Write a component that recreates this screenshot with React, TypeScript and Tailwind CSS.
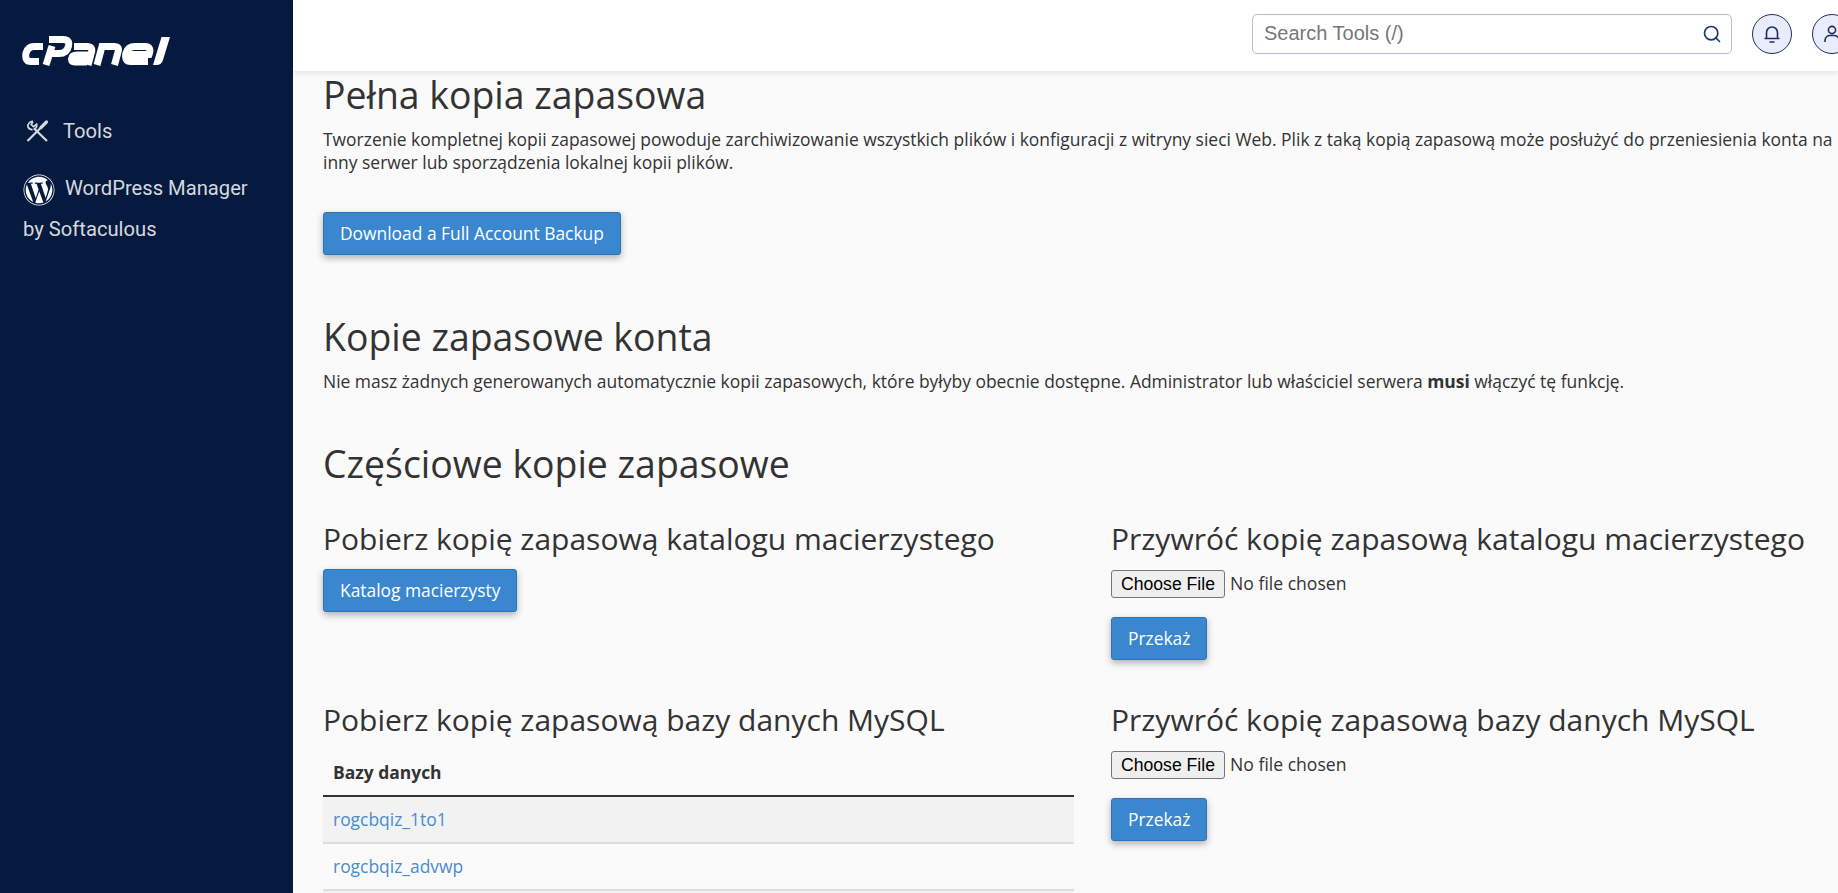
import { Search } from "lucide-react"
import { FaWordpress } from "react-icons/fa"

function Logo() {
  return (
    <svg viewBox="0 0 150 32" className="w-[150px] h-8" fill="none" stroke="#fff" strokeWidth="7">
      <path d="M21 10.5H12Q6 10.5 4 17Q2.5 25.5 9 25.5H17" />
      <path d="M27 3.5H41Q48 3.5 46.5 10Q45 17.5 37 17.5H28" />
      <path d="M30 10L24 29" />
      <path d="M52 10.5H65Q71 10.5 69.5 16L66 29" />
      <path d="M67 19H55Q50 19 49.5 23Q49.5 26 53 26H65" />
      <path d="M75 29L80 10.5H92Q98 10.5 96 16L92.5 29" />
      <path d="M105 18.5H127Q130 10.5 123 10.5H113Q106 10.5 104 17Q102 25.5 109 25.5H126" />
      <path d="M139.5 1H148L141 24Q139.5 29 134.5 29H131Z" fill="#fff" stroke="none" />
    </svg>
  )
}

function ToolsIcon() {
  return (
    <svg viewBox="0 0 24 24" className="w-6 h-6" fill="none" stroke="#d5d9df" strokeWidth="2.2">
      <path d="M8 2.5L6.2 5.6L8.6 7.6L11.6 5.2A4.6 4.6 0 0 1 9.8 10M8 2.5A4.6 4.6 0 0 0 3 8A4.6 4.6 0 0 0 7.6 10.5" strokeWidth="1.7" />
      <path d="M8.8 9.2L22 22" />
      <path d="M2.5 22L17 7.5" />
      <path d="M16 8.5L21.5 3" strokeWidth="3.2" strokeLinecap="round" />
    </svg>
  )
}

function RoundButton({ children }: { children: React.ReactNode }) {
  return (
    <button className="w-10 h-10 shrink-0 rounded-full border border-[#1c2f5c] bg-[#e9ecfb] flex items-center justify-center">
      {children}
    </button>
  )
}

function BlueButton({ children }: { children: React.ReactNode }) {
  return (
    <button className="h-[43px] px-[16px] bg-[#3a87cf] border border-[#2f73b4] rounded-[3px] text-white text-[17.4px] shadow-[0_3px_7px_rgba(0,0,0,0.3)]">
      {children}
    </button>
  )
}

function FileInput() {
  return (
    <input
      type="file"
      className="block w-[400px] h-7 text-[17.6px] text-[#333] file:h-7 file:w-[114px] file:mr-[5px] file:text-[#000] file:bg-[#efefef] file:border file:border-[#767676] file:rounded-[3px] file:font-['Liberation_Sans'] file:text-[17.6px]"
    />
  )
}

export default function App() {
  return (
    <div className="flex h-[893px] w-[1838px] overflow-hidden bg-[#fafafa] font-['Open_Sans',sans-serif] text-[#333]">
      <aside className="w-[293px] shrink-0 bg-[#051a3e] font-['Roboto',sans-serif] text-[#d5d9df] text-[20.2px]">
        <div className="pt-[36px] pl-[22px]">
          <Logo />
        </div>
        <div className="flex items-center gap-[14px] mt-[45px] ml-[25px] h-[36px]">
          <ToolsIcon />
          <span>Tools</span>
        </div>
        <div className="mt-[19px] ml-[23px] leading-[41px]">
          <FaWordpress className="inline-block w-[32px] h-[32px] mr-[10px] align-middle text-white" />
          WordPress Manager
          <br />
          by Softaculous
        </div>
      </aside>

      <div className="flex-1 min-w-0 flex flex-col">
        <header className="h-[71px] shrink-0 bg-white shadow-[0_1px_6px_rgba(0,0,0,0.12)] z-10 flex items-center gap-5 pl-[959px] pb-[3px]">
          <div className="w-[480px] shrink-0 h-10 rounded-[5px] border border-[#b4bdd4] flex items-center justify-between pl-[11px] pr-[9px] font-['Liberation_Sans',sans-serif] text-[20px] text-[#777]">
            <span className="pb-[2px]">Search Tools (/)</span>
            <Search className="w-5 h-5 text-[#1c3a70]" strokeWidth={2} />
          </div>
          <RoundButton>
            <svg viewBox="0 0 24 24" className="w-6 h-6" fill="none" stroke="#1c2f5c" strokeWidth="1.6">
              <path d="M4.5 16.5H19.5M6.5 16.5V10.5A5.5 5.5 0 0 1 17.5 10.5V16.5M9.5 20H14.5" />
            </svg>
          </RoundButton>
          <RoundButton>
            <svg viewBox="0 0 24 24" className="w-6 h-6" fill="none" stroke="#1c2f5c" strokeWidth="1.6">
              <circle cx="12" cy="8" r="3.6" />
              <path d="M5 20V18A5 5 0 0 1 10 13.5H14A5 5 0 0 1 19 18V20" />
            </svg>
          </RoundButton>
        </header>

        <main className="flex-1 overflow-hidden pl-[30px]">
          <div className="w-[1520px]">
            <h1 className="text-[37.4px] leading-[48px]">Pełna kopia zapasowa</h1>
            <p className="text-[17.44px] leading-[23px] mt-[9px]">
              Tworzenie kompletnej kopii zapasowej powoduje zarchiwizowanie wszystkich plików i konfiguracji z witryny
              sieci Web. Plik z taką kopią zapasową może posłużyć do przeniesienia konta na inny serwer lub sporządzenia
              lokalnej kopii plików.
            </p>
            <div className="mt-[38px]">
              <BlueButton>Download a Full Account Backup</BlueButton>
            </div>

            <h1 className="text-[37.4px] leading-[50px] mt-[57px]">Kopie zapasowe konta</h1>
            <p className="text-[17.44px] leading-[23px] mt-[8px]">
              Nie masz żadnych generowanych automatycznie kopii zapasowych, które byłyby obecnie dostępne. Administrator
              lub właściciel serwera <b>musi</b> włączyć tę funkcję.
            </p>

            <h1 className="text-[37.4px] leading-[50px] mt-[46px]">Częściowe kopie zapasowe</h1>

            <div className="grid grid-cols-[751px_1fr] gap-x-[37px] mt-[30px]">
              <section>
                <h2 className="text-[30px] leading-[40px]">Pobierz kopię zapasową katalogu macierzystego</h2>
                <div className="mt-[10px]">
                  <BlueButton>Katalog macierzysty</BlueButton>
                </div>
              </section>
              <section>
                <h2 className="text-[30px] leading-[40px]">Przywróć kopię zapasową katalogu macierzystego</h2>
                <div className="mt-[11px]">
                  <FileInput />
                </div>
                <div className="mt-[19px]">
                  <BlueButton>Przekaż</BlueButton>
                </div>
              </section>
              <section className="mt-[40px]">
                <h2 className="text-[30px] leading-[40px]">Pobierz kopię zapasową bazy danych MySQL</h2>
                <table className="w-full mt-[7px] text-[17.44px]">
                  <thead>
                    <tr className="border-b-2 border-[#333]">
                      <th className="text-left font-bold h-[49px] px-[10px] pt-[2px]">Bazy danych</th>
                    </tr>
                  </thead>
                  <tbody>
                    <tr className="border-b-2 border-[#ddd] bg-[#f2f2f2]">
                      <td className="h-[47px] px-[10px]">
                        <a className="text-[#4a8ccf]">rogcbqiz_1to1</a>
                      </td>
                    </tr>
                    <tr className="border-b-2 border-[#ddd]">
                      <td className="h-[47px] px-[10px]">
                        <a className="text-[#4a8ccf]">rogcbqiz_advwp</a>
                      </td>
                    </tr>
                    <tr className="bg-[#f2f2f2]">
                      <td className="h-[47px] px-[10px]" />
                    </tr>
                  </tbody>
                </table>
              </section>
              <section className="mt-[40px]">
                <h2 className="text-[30px] leading-[40px]">Przywróć kopię zapasową bazy danych MySQL</h2>
                <div className="mt-[11px]">
                  <FileInput />
                </div>
                <div className="mt-[19px]">
                  <BlueButton>Przekaż</BlueButton>
                </div>
              </section>
            </div>
          </div>
        </main>
      </div>
    </div>
  )
}
